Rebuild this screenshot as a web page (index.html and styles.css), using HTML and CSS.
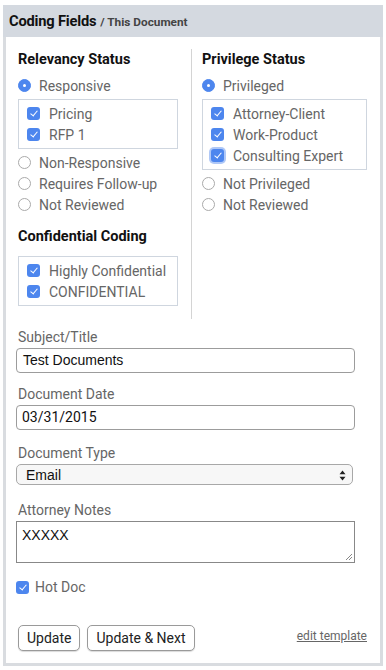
FILE: index.html
```html
<!DOCTYPE html>
<html>
<head>
<meta charset="utf-8">
<link rel="stylesheet" href="styles.css">
</head>
<body>
<div class="panel">
  <div class="panel-head"><span class="title">Coding Fields</span> <span class="sub">/ This Document</span></div>
  <div class="panel-body">
    <div class="columns">
      <div class="col col-left">
        <h3 class="group-title">Relevancy Status</h3>
        <div class="opt"><span class="radio on"></span><span class="lbl">Responsive</span></div>
        <div class="subbox">
          <div class="opt"><span class="check"></span><span class="lbl">Pricing</span></div>
          <div class="opt"><span class="check"></span><span class="lbl">RFP 1</span></div>
        </div>
        <div class="opt"><span class="radio"></span><span class="lbl">Non-Responsive</span></div>
        <div class="opt"><span class="radio"></span><span class="lbl">Requires Follow-up</span></div>
        <div class="opt"><span class="radio"></span><span class="lbl">Not Reviewed</span></div>
        <h3 class="group-title second">Confidential Coding</h3>
        <div class="subbox conf">
          <div class="opt"><span class="check"></span><span class="lbl">Highly Confidential</span></div>
          <div class="opt"><span class="check"></span><span class="lbl">CONFIDENTIAL</span></div>
        </div>
      </div>
      <div class="col col-right">
        <h3 class="group-title">Privilege Status</h3>
        <div class="opt"><span class="radio on"></span><span class="lbl">Privileged</span></div>
        <div class="subbox wide">
          <div class="opt"><span class="check"></span><span class="lbl">Attorney-Client</span></div>
          <div class="opt"><span class="check"></span><span class="lbl">Work-Product</span></div>
          <div class="opt"><span class="check focus"></span><span class="lbl">Consulting Expert</span></div>
        </div>
        <div class="opt"><span class="radio"></span><span class="lbl">Not Privileged</span></div>
        <div class="opt"><span class="radio"></span><span class="lbl">Not Reviewed</span></div>
      </div>
    </div>

    <div class="field first">
      <div class="flabel">Subject/Title</div>
      <div class="input">Test Documents</div>
    </div>
    <div class="field">
      <div class="flabel">Document Date</div>
      <div class="input date">03/31/2015</div>
    </div>
    <div class="field">
      <div class="flabel">Document Type</div>
      <div class="select"><span>Email</span>
        <svg class="arrows" width="7" height="11" viewBox="0 0 7 11"><path d="M3.5 0.5 L6.5 4.3 H0.5 Z M3.5 10.5 L6.5 6.7 H0.5 Z" fill="#222"/></svg>
      </div>
    </div>
    <div class="field">
      <div class="flabel">Attorney Notes</div>
      <div class="textarea">XXXXX
        <svg class="grip" width="9" height="9" viewBox="0 0 9 9"><path d="M8 2 L2 8 M8 5 L5 8" stroke="#888" stroke-width="1"/></svg>
      </div>
    </div>
    <div class="hot"><span class="check small"></span><span class="lbl">Hot Doc</span></div>

    <div class="actions">
      <button class="btn">Update</button>
      <button class="btn">Update &amp; Next</button>
      <a class="edit" href="#">edit template</a>
    </div>
  </div>
</div>
</body>
</html>
```
FILE: styles.css
```css
* { box-sizing: border-box; }
body {
  margin: 0;
  background: #fff;
  font-family: Roboto, "Liberation Sans", sans-serif;
}
.panel {
  margin: 5px 3px 0 3px;
  width: 380px;
  height: 661px;
  border: 3px solid #d9dce0;
  border-top: 0;
  display: flex;
  flex-direction: column;
}
.panel-head {
  background: #d4d9e0;
  height: 32px;
  margin: 0 -3px;
  padding: 6px 0 0 6px;
  white-space: nowrap;
}
.title { font-weight: 700; font-size: 14.7px; color: #111; letter-spacing: -0.2px; }
.sub { font-weight: 700; font-size: 11.8px; color: #444; }
.panel-body {
  padding: 12px 10px 0 10px;
  flex: 1;
  display: flex;
  flex-direction: column;
}
.columns { display: flex; }
.col-left {
  width: 176px;
  border-right: 1px solid #d4d4d4;
  padding: 3px 0 10px 2px;
}
.col-right { padding: 3px 0 0 10px; flex: 1; }
.group-title {
  margin: 0 0 7px 0;
  font-size: 14.5px;
  font-weight: 700;
  color: #111;
  line-height: 16px;
}
.group-title.second { margin-top: 14px; margin-bottom: 11px; }
.opt {
  display: flex;
  align-items: center;
  height: 21px;
  font-size: 14px;
  color: #666;
}
.radio {
  width: 13px; height: 13px;
  border-radius: 50%;
  border: 1px solid #aaa;
  background: #fff;
  margin-right: 8px;
  flex: none;
  position: relative;
}
.radio.on { background: #4d86ee; border-color: #4d86ee; }
.radio.on::after {
  content: "";
  position: absolute;
  left: 4px; top: 4px;
  width: 3px; height: 3px;
  border-radius: 50%;
  background: #fff;
}
.subbox {
  width: 160px;
  border: 1px solid #cfd6df;
  padding: 3px 0 3px 8px;
  margin: 3px 0 3px 0;
}
.subbox.wide { width: 165px; }
.check {
  width: 13px; height: 13px;
  border-radius: 3px;
  background: #4d86ee;
  margin-right: 9px;
  flex: none;
  position: relative;
}
.check::after {
  content: "";
  position: absolute;
  left: 4.5px; top: 2px;
  width: 3px; height: 6px;
  border: solid #fff;
  border-width: 0 1.5px 1.5px 0;
  transform: rotate(40deg);
}
.check.focus { box-shadow: 0 0 0 2px rgba(77, 134, 238, 0.45); }
.field.first { margin-top: 9px; }
.flabel {
  font-size: 14px;
  color: #666;
  height: 20px;
  line-height: 18px;
  padding-left: 2px;
}
.input {
  width: 339px;
  height: 25px;
  border: 1px solid #9c9c9c;
  border-radius: 4px;
  font-family: "Liberation Sans", Arial, sans-serif;
  font-size: 14px;
  color: #111;
  padding: 3px 0 0 6px;
  margin-bottom: 12px;
}
.input.date { font-family: Roboto, sans-serif; padding-left: 5px; margin-bottom: 14px; }
.select {
  width: 337px;
  height: 21px;
  border: 1px solid #a8a8a8;
  border-radius: 5px;
  background: #f7f7f7;
  font-family: "Liberation Sans", Arial, sans-serif;
  font-size: 14px;
  color: #111;
  padding: 1px 6px 0 9px;
  display: flex;
  align-items: center;
  justify-content: space-between;
  margin-bottom: 16px;
}
.textarea {
  width: 339px;
  height: 42px;
  border: 1px solid #888;
  font-family: "Liberation Sans", Arial, sans-serif;
  font-size: 14px;
  color: #111;
  padding: 5px 0 0 5px;
  position: relative;
}
.grip { position: absolute; right: 1px; bottom: 1px; }
.hot {
  display: flex;
  align-items: center;
  margin-top: 16px;
  font-size: 14px;
  color: #666;
}
.check.small { margin-right: 6px; }
.actions {
  margin-top: 30px;
  display: flex;
  align-items: center;
  padding-left: 2px;
}
.btn {
  font-family: Roboto, sans-serif;
  font-size: 14px;
  color: #222;
  background: #fff;
  border: 1px solid #9a9a9a;
  border-radius: 5px;
  height: 26px;
  padding: 0 8px;
  margin-right: 7px;
  box-shadow: 0 1px 1px rgba(0,0,0,0.15);
}
.edit {
  margin-left: auto;
  margin-right: 3px;
  margin-bottom: 4px;
  font-size: 12px;
  color: #666;
  text-decoration: underline;
}
```
